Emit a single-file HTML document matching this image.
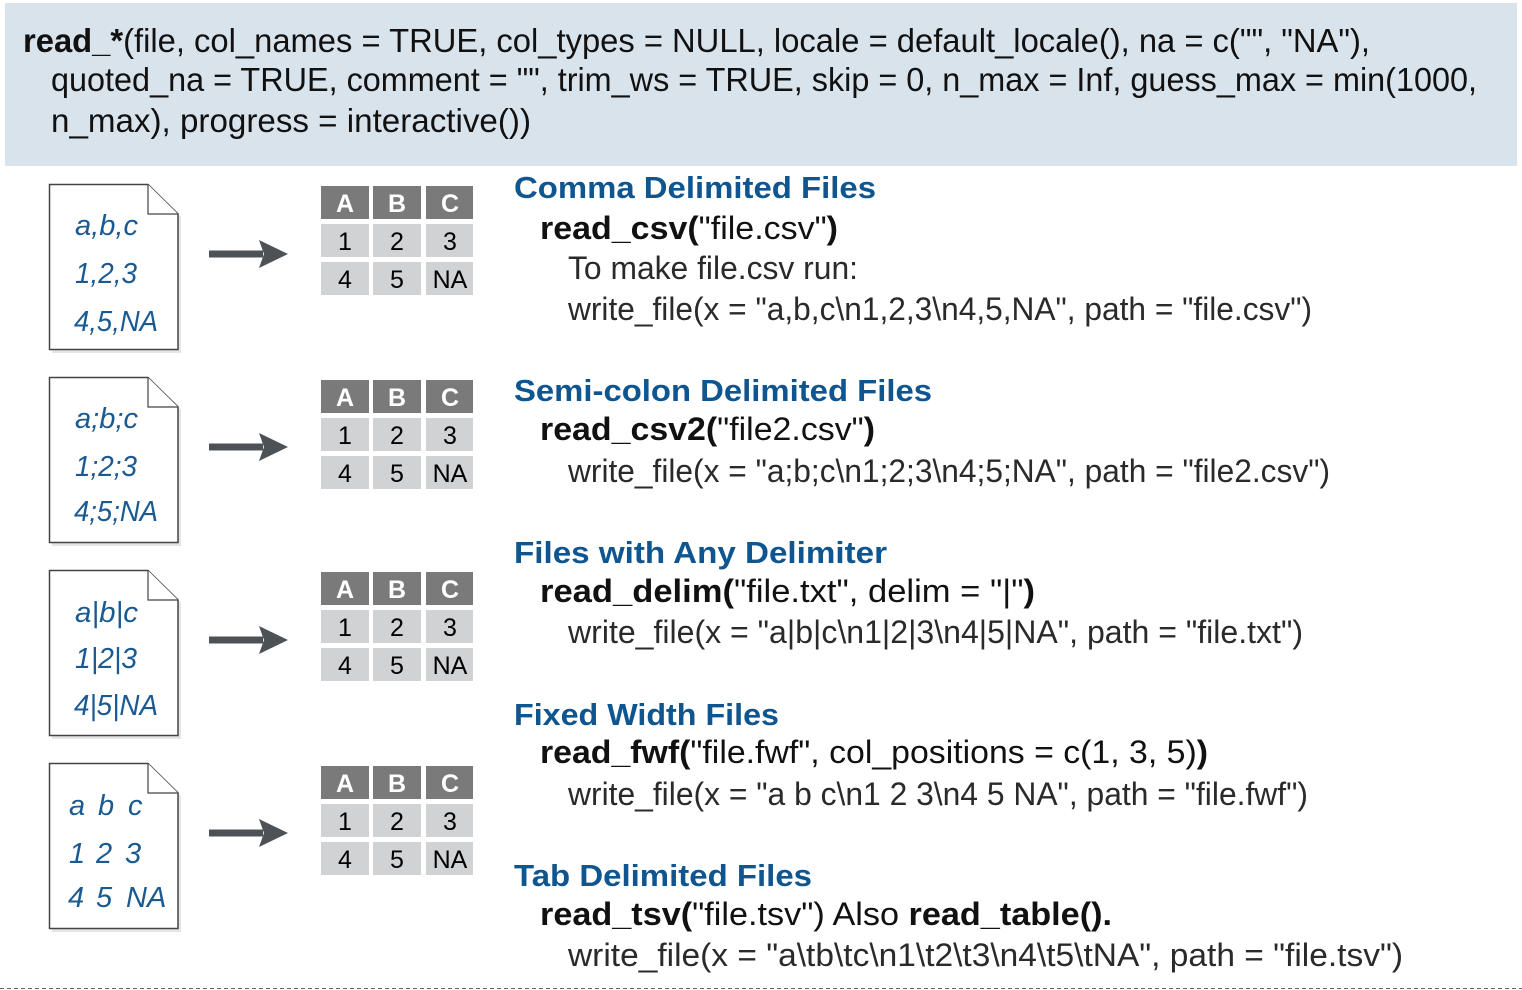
<!DOCTYPE html>
<html><head><meta charset="utf-8"><style>
html,body{margin:0;padding:0;background:#fff;width:1522px;height:990px;overflow:hidden}
svg{display:block}
.h{font-family:"Liberation Sans",sans-serif;font-size:33px;fill:#111}
.t{font-family:"Liberation Sans",sans-serif;font-weight:bold;font-size:31px;fill:#0f5590}
.c{font-family:"Liberation Sans",sans-serif;font-size:32px;fill:#111}
.w{font-family:"Liberation Sans",sans-serif;font-size:32px;fill:#2a2a2a}
.f{font-family:"Liberation Sans",sans-serif;font-style:italic;font-size:29px;fill:#1a5a92}
.th{font-family:"Liberation Sans",sans-serif;font-weight:bold;font-size:25px;fill:#fff}
.td{font-family:"Liberation Sans",sans-serif;font-size:25px;fill:#000}
</style></head><body>
<svg width="1522" height="990" xmlns="http://www.w3.org/2000/svg">
<defs>
<g id="file">
<path d="M3 3 H102 L132 33 V169 H3 Z" fill="#ccc" opacity="0.5"/>
<path d="M.5 .5 H99 L129 30 V165.5 H.5 Z" fill="#fff" stroke="#444" stroke-width="1.5"/>
<path d="M99 .5 V30 H129" fill="#fff" stroke="#444" stroke-width="1.2"/>
</g>
<g id="tbl">
<rect x="0" y="0" width="48" height="33" fill="#7a7a7a"/>
<rect x="52" y="0" width="48" height="33" fill="#7a7a7a"/>
<rect x="105" y="0" width="47" height="33" fill="#7a7a7a"/>
<rect x="0" y="38" width="48" height="33" fill="#d0d2d3"/>
<rect x="52" y="38" width="48" height="33" fill="#d0d2d3"/>
<rect x="105" y="38" width="47" height="33" fill="#d0d2d3"/>
<rect x="0" y="76" width="48" height="33" fill="#d0d2d3"/>
<rect x="52" y="76" width="48" height="33" fill="#d0d2d3"/>
<rect x="105" y="76" width="47" height="33" fill="#d0d2d3"/>
<text class="th" x="24" y="26" text-anchor="middle">A</text>
<text class="th" x="76" y="26" text-anchor="middle">B</text>
<text class="th" x="129" y="26" text-anchor="middle">C</text>
<text class="td" x="24" y="64" text-anchor="middle">1</text>
<text class="td" x="76" y="64" text-anchor="middle">2</text>
<text class="td" x="129" y="64" text-anchor="middle">3</text>
<text class="td" x="24" y="102" text-anchor="middle">4</text>
<text class="td" x="76" y="102" text-anchor="middle">5</text>
<text class="td" x="129" y="102" text-anchor="middle">NA</text>
</g>
<g id="arr">
<rect x="209" y="-3.5" width="54" height="7" fill="#4d5257"/>
<path d="M259 -14 L288 0 L259 14 L264 0 Z" fill="#4d5257"/>
</g>
</defs>
<rect x="5" y="3" width="1512" height="163" fill="#d9e3ec"/>
<text class="h" x="23" y="52" textLength="1347" lengthAdjust="spacingAndGlyphs"><tspan font-weight="bold">read_*</tspan>(file, col_names = TRUE, col_types = NULL, locale = default_locale(), na = c("", "NA"),</text>
<text class="h" x="51" y="91" textLength="1426" lengthAdjust="spacingAndGlyphs">quoted_na = TRUE, comment = "", trim_ws = TRUE, skip = 0, n_max = Inf, guess_max = min(1000,</text>
<text class="h" x="51" y="132" textLength="480" lengthAdjust="spacingAndGlyphs">n_max), progress = interactive())</text>

<g transform="translate(49 184)"><use href="#file"/></g>
<g transform="translate(49 377)"><use href="#file"/></g>
<g transform="translate(49 570)"><use href="#file"/></g>
<g transform="translate(49 763)"><use href="#file"/></g>

<text class="f" x="75" y="235" textLength="63" lengthAdjust="spacingAndGlyphs">a,b,c</text>
<text class="f" x="75" y="283" textLength="62" lengthAdjust="spacingAndGlyphs">1,2,3</text>
<text class="f" x="74" y="331" textLength="84" lengthAdjust="spacingAndGlyphs">4,5,NA</text>
<text class="f" x="75" y="428" textLength="63" lengthAdjust="spacingAndGlyphs">a;b;c</text>
<text class="f" x="75" y="476" textLength="62" lengthAdjust="spacingAndGlyphs">1;2;3</text>
<text class="f" x="74" y="521" textLength="84" lengthAdjust="spacingAndGlyphs">4;5;NA</text>
<text class="f" x="75" y="622" textLength="63" lengthAdjust="spacingAndGlyphs">a|b|c</text>
<text class="f" x="75" y="668" textLength="62" lengthAdjust="spacingAndGlyphs">1|2|3</text>
<text class="f" x="74" y="715" textLength="84" lengthAdjust="spacingAndGlyphs">4|5|NA</text>
<text class="f" y="815"><tspan x="69">a</tspan><tspan x="98">b</tspan><tspan x="128">c</tspan></text>
<text class="f" y="863"><tspan x="69">1</tspan><tspan x="96">2</tspan><tspan x="125">3</tspan></text>
<text class="f" y="907"><tspan x="68">4</tspan><tspan x="96">5</tspan><tspan x="126">NA</tspan></text>

<g transform="translate(0 254)"><use href="#arr"/></g>
<g transform="translate(0 447)"><use href="#arr"/></g>
<g transform="translate(0 640)"><use href="#arr"/></g>
<g transform="translate(0 833)"><use href="#arr"/></g>

<g transform="translate(321 186)"><use href="#tbl"/></g>
<g transform="translate(321 380)"><use href="#tbl"/></g>
<g transform="translate(321 572)"><use href="#tbl"/></g>
<g transform="translate(321 766)"><use href="#tbl"/></g>

<text class="t" x="514" y="198" textLength="362" lengthAdjust="spacingAndGlyphs">Comma Delimited Files</text>
<text class="c" x="540" y="239" textLength="298" lengthAdjust="spacingAndGlyphs"><tspan font-weight="bold">read_csv(</tspan>"file.csv"<tspan font-weight="bold">)</tspan></text>
<text class="w" x="568" y="279" textLength="290" lengthAdjust="spacingAndGlyphs">To make file.csv run:</text>
<text class="w" x="568" y="320" textLength="744" lengthAdjust="spacingAndGlyphs">write_file(x = "a,b,c\n1,2,3\n4,5,NA", path = "file.csv")</text>

<text class="t" x="514" y="401" textLength="418" lengthAdjust="spacingAndGlyphs">Semi-colon Delimited Files</text>
<text class="c" x="540" y="440" textLength="335" lengthAdjust="spacingAndGlyphs"><tspan font-weight="bold">read_csv2(</tspan>"file2.csv"<tspan font-weight="bold">)</tspan></text>
<text class="w" x="568" y="482" textLength="762" lengthAdjust="spacingAndGlyphs">write_file(x = "a;b;c\n1;2;3\n4;5;NA", path = "file2.csv")</text>

<text class="t" x="514" y="563" textLength="373" lengthAdjust="spacingAndGlyphs">Files with Any Delimiter</text>
<text class="c" x="540" y="602" textLength="495" lengthAdjust="spacingAndGlyphs"><tspan font-weight="bold">read_delim(</tspan>"file.txt", delim = "|"<tspan font-weight="bold">)</tspan></text>
<text class="w" x="568" y="643" textLength="735" lengthAdjust="spacingAndGlyphs">write_file(x = "a|b|c\n1|2|3\n4|5|NA", path = "file.txt")</text>

<text class="t" x="514" y="725" textLength="265" lengthAdjust="spacingAndGlyphs">Fixed Width Files</text>
<text class="c" x="540" y="763" textLength="668" lengthAdjust="spacingAndGlyphs"><tspan font-weight="bold">read_fwf(</tspan>"file.fwf", col_positions = c(1, 3, 5)<tspan font-weight="bold">)</tspan></text>
<text class="w" x="568" y="805" textLength="740" lengthAdjust="spacingAndGlyphs">write_file(x = "a b c\n1 2 3\n4 5 NA", path = "file.fwf")</text>

<text class="t" x="514" y="886" textLength="298" lengthAdjust="spacingAndGlyphs">Tab Delimited Files</text>
<text class="c" x="540" y="925" textLength="572" lengthAdjust="spacingAndGlyphs"><tspan font-weight="bold">read_tsv(</tspan>"file.tsv") Also <tspan font-weight="bold">read_table().</tspan></text>
<text class="w" x="568" y="966" textLength="835" lengthAdjust="spacingAndGlyphs">write_file(x = "a\tb\tc\n1\t2\t3\n4\t5\tNA", path = "file.tsv")</text>

<line x1="0" y1="988.5" x2="1522" y2="988.5" stroke="#666" stroke-width="1" stroke-dasharray="4 3"/>
</svg>
</body></html>
